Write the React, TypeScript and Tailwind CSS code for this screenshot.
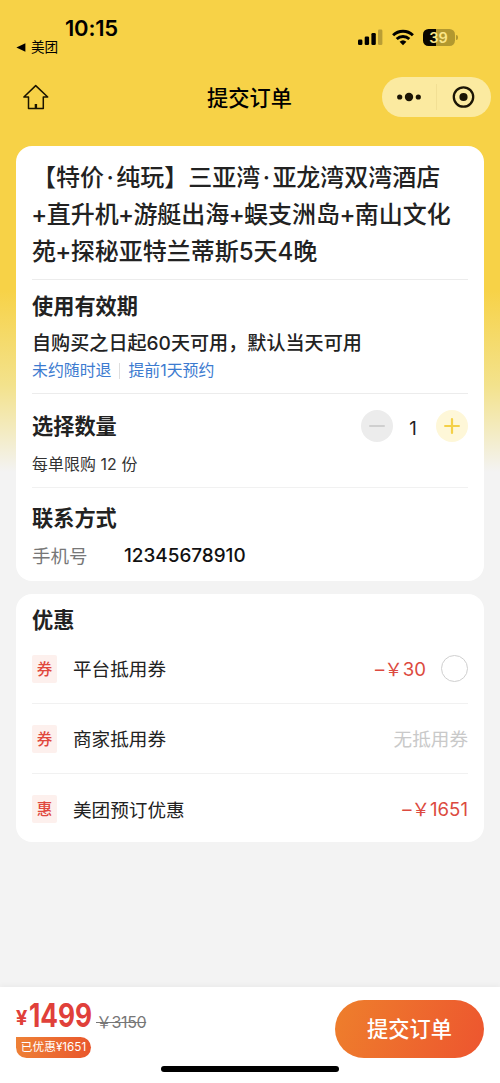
import type { ReactNode } from 'react';

function Dot() {
  return <span className="inline-block w-[12.2px] text-center">·</span>;
}

function Plus() {
  return <span className="inline-flex w-[14.7px] justify-center">+</span>;
}

function StatusBar() {
  return (
    <div className="flex h-[64px] justify-between pl-[16px] pr-[42px]">
      <div className="flex flex-col">
        <span className="mt-[14px] pl-[49px] text-[22px] font-semibold leading-[28px] tracking-[-0.2px]">10:15</span>
        <span className="flex h-[10px] items-center gap-[5px] text-[13.6px] leading-[10px]">
          <svg width="10" height="9" viewBox="0 0 10 9"><path d="M9.4.3v8.4L.4 4.5z" /></svg>
          美团
        </span>
      </div>
      <div className="mt-[28px] flex h-[19px] items-center">
        <svg width="25" height="17" viewBox="0 0 25 17">
          <rect x="0" y="10.5" width="4.4" height="5.5" rx="1.3" />
          <rect x="6.7" y="7.5" width="4.4" height="8.5" rx="1.3" />
          <rect x="13.4" y="4" width="4.4" height="12" rx="1.3" />
          <rect x="20" y="0.5" width="4.4" height="15.5" rx="1.3" opacity=".25" />
        </svg>
        <svg className="ml-[9px]" width="22" height="17" viewBox="0 0 22 17" fill="none" stroke="#000" strokeWidth="2.9">
          <path d="M1.1 6.2a14.2 14.2 0 0 1 19.8 0" />
          <path d="M4.7 10a9.1 9.1 0 0 1 12.6 0" />
          <path d="M7.6 12.8a5 5 0 0 1 6.8 0L11 16.3z" fill="#000" stroke="none" />
        </svg>
        <div className="ml-[9px] flex h-[17px] w-[32px] items-center justify-center rounded-[5.5px] bg-[linear-gradient(90deg,#090600_0_13px,#b2982f_13px)] pr-[1px] text-[14.5px] font-semibold leading-[17px] text-[#fae588]">
          39
        </div>
        <span className="ml-[1px] h-[5px] w-[2px] rounded-r-full bg-[#b2982f]" />
      </div>
    </div>
  );
}

function NavBar() {
  return (
    <div className="flex h-[82px] items-start justify-between pl-[23px] pr-[9px] pt-[13px]">
      <svg className="mt-[7px] w-[26px]" width="26" height="26" viewBox="0 0 26 26" fill="none" stroke="#1b1400" strokeWidth="1.5" strokeLinejoin="round">
        <path d="M12.7 1.6.9 13h4.6v11.5h14.8V13h4.4z" />
        <path d="M12.9 24.5V20" strokeWidth="2.4" />
      </svg>
      <h1 className="ml-[68px] pt-px text-[21.2px] font-medium leading-[40px]">提交订单</h1>
      <div className="flex h-[40px] w-[109px] items-center rounded-full bg-[#fbeaa0]">
        <div className="flex w-[54px] justify-center">
          <svg width="26" height="10" viewBox="0 0 26 10" fill="#1b1505">
            <circle cx="3.7" cy="5" r="2.6" /><circle cx="13" cy="5" r="4.2" /><circle cx="22.3" cy="5" r="2.6" />
          </svg>
        </div>
        <span className="h-[26px] w-px bg-[#f2df94]" />
        <div className="flex flex-1 justify-center">
          <svg width="23" height="23" viewBox="0 0 23 23" fill="#1b1505">
            <circle cx="11.5" cy="11" r="9.7" fill="none" stroke="#1b1505" strokeWidth="2.3" />
            <circle cx="11.5" cy="11" r="4.1" />
          </svg>
        </div>
      </div>
    </div>
  );
}

function Heading({ children }: { children: ReactNode }) {
  return <h2 className="text-[21.2px] font-semibold leading-[30px]">{children}</h2>;
}

function CouponRow({ tag, name, last, children }: { tag: string; name: string; last?: boolean; children: ReactNode }) {
  return (
    <div className={`flex h-[70px] items-center text-[18.6px] ${last ? '' : 'border-b border-[#f1f1f1]'}`}>
      <span className="flex h-[28px] w-[25px] items-center justify-center rounded-[2px] bg-[#fdf0ed] pt-[2px] text-[15.5px] font-medium leading-[26px] text-[#e0483e]">{tag}</span>
      <span className="ml-[16px] flex-1 pt-[3px]">{name}</span>
      {children}
    </div>
  );
}

export default function App() {
  return (
    <div className="flex h-[1083px] w-[500px] flex-col overflow-hidden bg-[#f3f3f3] bg-[linear-gradient(180deg,#f7d247_0px,#f7d247_290px,#f3e28c_385px,#f3ebc0_430px,#f3f3f3_472px)] font-['Inter','Noto_Sans_CJK_SC',sans-serif] text-[#222]">
      <header className="text-black">
        <StatusBar />
        <NavBar />
      </header>

      <main className="flex flex-1 flex-col gap-[13px] px-[16px]">
        <section className="h-[435px] rounded-[16px] bg-white px-[16px] pt-[13px]">
          <div className="h-[121px] whitespace-nowrap border-b border-[#ececec] text-[24px] font-medium leading-[37px]">
            <p>【特价<Dot />纯玩】三亚湾<Dot />亚龙湾双湾酒店</p>
            <p><Plus />直升机<Plus />游艇出海<Plus />蜈支洲岛<Plus />南山文化</p>
            <p>苑<Plus />探秘亚特兰蒂斯5天4晚</p>
          </div>
          <div className="h-[114px] border-b border-[#ececec] pt-[11px]">
            <Heading>使用有效期</Heading>
            <p className="mt-[7px] text-[19.1px] font-medium leading-[30px]">自购买之日起60天可用，默认当天可用</p>
            <div className="-mt-[1px] flex items-center text-[15.9px] leading-[28px] text-[#3c7bd0]">
              <span>未约随时退</span>
              <span className="mx-[8px] h-[16px] w-px bg-[#dedede]" />
              <span>提前1天预约</span>
            </div>
          </div>
          <div className="h-[94px] border-b border-[#f1f1f1] pt-[16px]">
            <div className="flex h-[32px] items-center justify-between">
              <Heading>选择数量</Heading>
              <div className="flex items-center">
                <button className="flex h-[32px] w-[32px] items-center justify-center rounded-full bg-[#ececec]">
                  <span className="h-[2px] w-[16px] rounded-full bg-[#cfcfcf]" />
                </button>
                <span className="w-[43px] pr-[3px] pt-[4px] text-center text-[18.5px] leading-[24px]">1</span>
                <button className="flex h-[32px] w-[32px] items-center justify-center rounded-full bg-[#fef7d8]">
                  <svg width="16" height="16" viewBox="0 0 16 16" stroke="#f4d047" strokeWidth="2.2" strokeLinecap="round"><path d="M8 1.1v13.8M1.1 8h13.8" /></svg>
                </button>
              </div>
            </div>
            <p className="mt-[11px] text-[15.9px] leading-[24px] tracking-[0.1px] text-[#333]">每单限购 12 份</p>
          </div>
          <div className="pt-[15px]">
            <Heading>联系方式</Heading>
            <div className="mt-[8px] flex leading-[30px]">
              <span className="w-[92px] text-[18.5px] text-[#777]">手机号</span>
              <span className="text-[18.9px] font-medium text-[#111]">12345678910</span>
            </div>
          </div>
        </section>

        <section className="h-[248px] rounded-[16px] bg-white px-[16px] pt-[11px]">
          <Heading>优惠</Heading>
          <div className="-mt-px">
            <CouponRow tag="券" name="平台抵用券">
              <span className="pt-[3px] text-[#dc4a40]">–￥30</span>
              <span className="ml-[15px] h-[27px] w-[27px] rounded-full border-[1.5px] border-[#cfcfcf]" />
            </CouponRow>
            <CouponRow tag="券" name="商家抵用券">
              <span className="pt-[3px] text-[#c9c9c9]">无抵用券</span>
            </CouponRow>
            <CouponRow tag="惠" name="美团预订优惠" last>
              <span className="pt-[2px] text-[#dc4a40]">–￥1651</span>
            </CouponRow>
          </div>
        </section>
      </main>

      <footer className="flex h-[96px] flex-col bg-white shadow-[0_-2px_5px_rgba(0,0,0,0.035)]">
        <div className="flex h-[79px] items-start justify-between px-[16px]">
          <div className="flex flex-col items-start pt-[12px]">
            <div className="flex h-[34px] items-end whitespace-nowrap leading-[34px]">
              <span className="w-[13px] font-['Roboto'] text-[21px] font-bold leading-[30px] text-[#e0403a]">¥</span>
              <span className="w-[64px] origin-left scale-x-[0.82] text-[32px] font-bold text-[#e0403a]">1499</span>
              <span className="ml-[3px] text-[16px] leading-[22px] tracking-[-0.4px] text-[#777] line-through">￥3150</span>
            </div>
            <span className="mt-[4px] flex h-[21px] w-[75px] items-center justify-center rounded-full rounded-tl-none bg-[linear-gradient(100deg,#ee8136,#e9562c)] text-[11.7px] leading-[21px] text-white">已优惠¥1651</span>
          </div>
          <button className="mt-[13px] h-[58px] w-[149px] rounded-full bg-[linear-gradient(110deg,#ee7f2c,#ed552f)] text-[21.2px] font-medium leading-[58px] text-white">提交订单</button>
        </div>
        <span className="h-[6px] w-[178px] self-center rounded-full bg-black" />
      </footer>
    </div>
  );
}
